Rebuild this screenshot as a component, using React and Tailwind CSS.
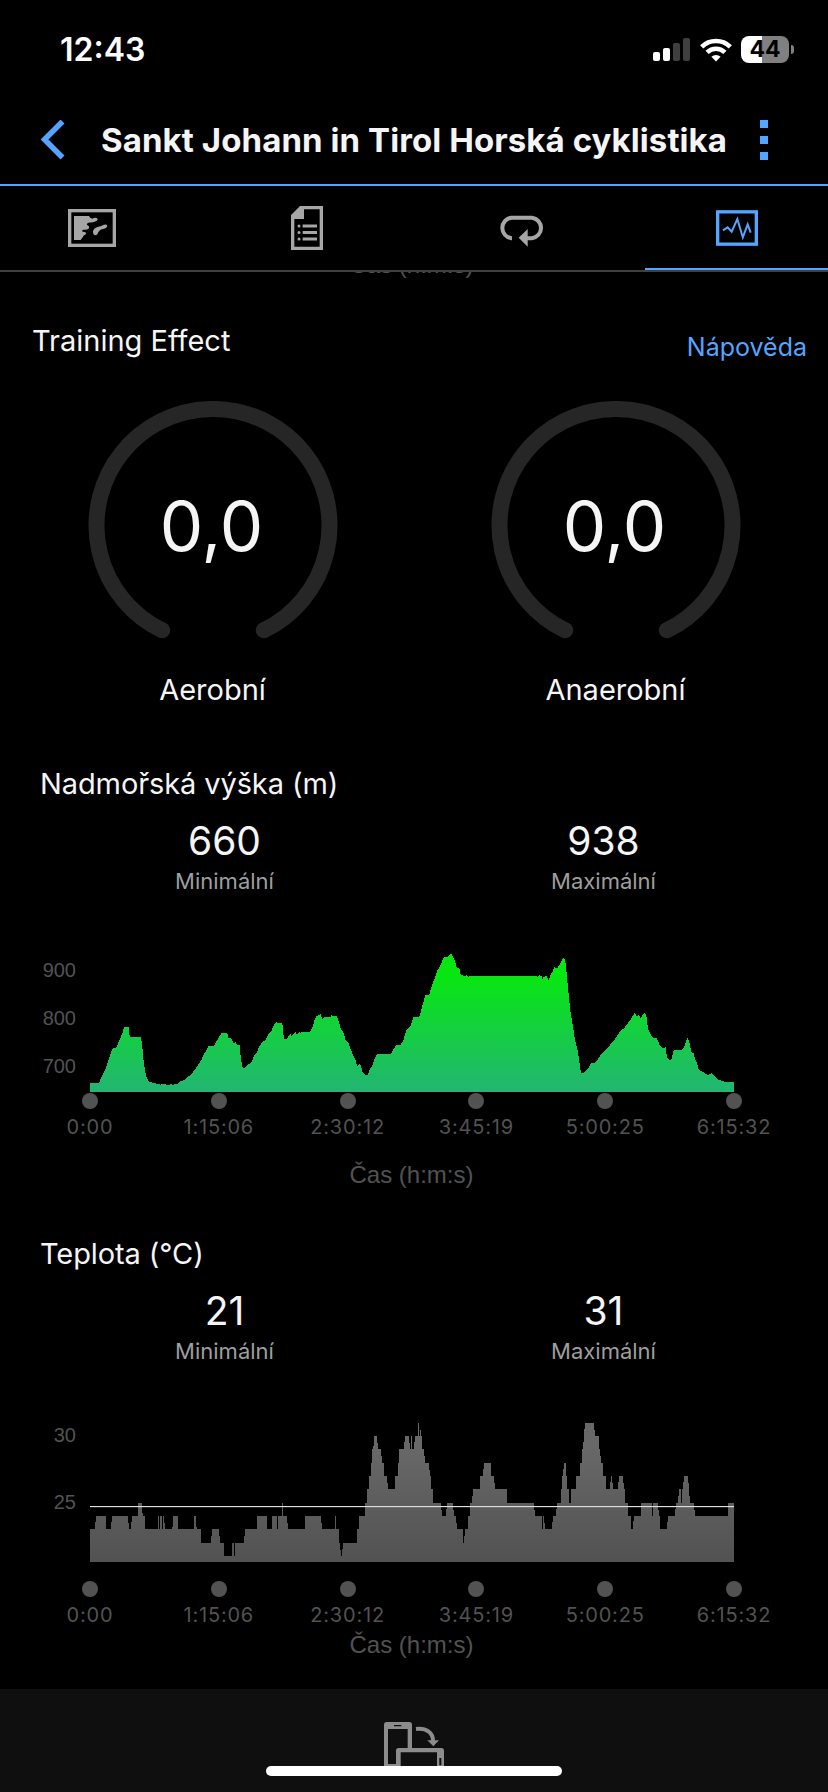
const BLUE = '#53a5ff';

// x,y outline of each profile, y grows downwards, 486 is the baseline
const elevation = [
    {
        shift: -90,
        points: '90,459 116,459 118,456 126,438 136,420 140,405 150,378 155,360 162,354 169,354 172,345 180,328 187,310 192,291 206,291 208,312 210,321 243,321 247,350 250,385 254,415 259,440 266,454 270,459 274,455 280,460 296,461 300,464 316,462 322,465 334,463 340,464 344,461 354,461 362,454 372,450 382,442 394,432 404,420 414,405 424,390 432,372 440,360 445,348 462,348 468,337 476,323 484,310 502,310 505,323 515,326 522,343 526,334 531,345 539,346 542,380 547,412 554,414 566,403 576,396 582,378 590,367 600,346 608,334 617,330 624,315 634,303 640,288 649,274 653,279 667,280 669,300 672,327 680,327 686,318 691,312 694,318 700,314 706,305 711,315 719,307 723,309 726,305 750,305 758,290 764,268 770,258 782,253 787,267 795,261 811,262 815,253 817,258 831,259 836,275 842,295 850,308 857,330 865,337 872,358 880,377 886,388 892,410 899,403 903,408 908,428 915,434 924,434 930,415 936,411 942,390 951,372 993,372 998,361 1006,350 1010,343 1016,346',
    },
    {
        shift: 930,
        points: '0,346 10,332 18,303 32,288 40,261 58,260 66,232 76,196 88,193 96,165 104,146 112,122 120,110 128,88 134,81 144,80 153,69 158,80 164,90 170,112 178,116 182,135 196,138 200,135 205,140 208,138 409,138 412,140 419,135 424,138 428,147 430,140 440,139 446,150 452,135 457,126 463,110 468,115 474,112 482,98 490,84 495,88 499,120 502,155 506,195 512,250 518,285 526,335 532,355 538,395 543,429 552,428 562,419 572,402 578,398 582,402 592,390 600,378 616,362 630,345 644,328 656,311 664,300 671,297 680,284 692,268 704,248 710,258 716,256 722,264 728,254 734,247 739,256 744,297 756,322 770,324 778,343 788,356 797,352 801,384 810,392 814,388 821,361 838,360 844,362 852,352 863,322 869,340 874,367 881,370 886,390 892,402 896,418 910,427 924,435 934,430 942,438 956,449 970,454 988,457 998,456 1002,458',
    },
];

const temperature = [
    {
        shift: -210,
        points: '210,387 225,387 228,348 258,348 258,387 273,387 276,348 324,348 327,387 333,387 336,348 354,348 354,309 366,309 368,348 375,348 375,387 414,387 415,348 417,348 417,387 420,387 420,348 426,348 427,387 429,387 430,348 432,348 435,387 457,387 460,348 474,348 474,387 522,387 522,348 527,348 530,387 543,387 543,429 573,429 576,387 597,387 600,429 612,429 612,468 636,468 636,429 642,429 642,468 645,468 645,429 672,429 675,387 711,387 711,348 741,348 741,387 756,387 756,348 771,348 771,387 773,387 774,348 786,348 786,309 789,309 789,348 801,348 804,387 855,387 855,348 903,348 906,387 945,387 945,348 947,348 948,387 957,387 958,429 960,429 963,468 966,468 969,429 1011,429 1011,387 1017,387 1017,348 1035,348 1036,309 1041,309 1041,267 1047,267 1047,228 1053,228 1053,189 1056,189 1056,147 1060,147 1062,108 1071,108 1074,147 1083,147 1086,189 1092,189 1092,228 1101,228 1104,267 1125,267 1125,228 1134,228 1134,189 1137,189 1137,147',
    },
    {
        shift: 930,
        points: '0,147 12,147 15,108 27,108 30,147 33,147 33,108 36,108 36,147 42,147 45,108 54,108 54,69 57,69 57,108 60,108 60,69 63,108 66,108 66,147 72,147 75,189 87,189 90,228 93,228 93,267 99,267 99,309 123,309 126,348 138,348 141,309 159,309 162,348 168,348 171,387 189,387 190,429 192,429 195,387 204,387 204,348 210,348 211,309 216,309 219,267 240,267 240,228 249,228 252,189 273,189 273,228 282,228 285,267 321,267 321,309 402,309 405,348 426,348 427,387 429,387 429,348 432,348 435,387 456,387 459,348 468,348 471,309 483,309 483,267 486,267 486,228 489,228 492,189 498,189 501,267 507,267 507,309 513,309 513,267 528,267 528,228 540,228 540,189 546,189 546,147 549,147 552,108 555,69 582,69 585,108 597,108 597,147 600,147 603,189 609,189 609,228 618,228 618,267 630,267 633,228 636,228 639,267 654,267 657,228 669,228 672,267 675,267 675,309 684,309 684,348 693,348 693,387 698,387 702,348 723,348 723,309 756,309 756,348 759,348 759,309 774,309 777,348 780,348 780,387 801,387 804,348 825,348 828,309 834,309 837,267 843,267 843,309 846,309 846,267 849,267 852,228 864,228 867,267 870,309 882,309 885,348 984,348 984,309 1002,309',
    },
];

const times = ['0:00', '1:15:06', '2:30:12', '3:45:19', '5:00:25', '6:15:32'];

const areaPoints = (parts) => {
    const outline = parts.flatMap(({ shift, points }) =>
        points.split(' ').map((pair) => {
            const [x, y] = pair.split(',').map(Number);
            return `${x + shift},${y}`;
        })
    );
    return ['0,486', ...outline, '1932,486'].join(' ');
};

const MapIcon = () => (
    <svg width="48" height="38" viewBox="201 87 144 114" fill="#a6a6a6">
        <rect x="206" y="92" width="134" height="104" fill="none" stroke="#a6a6a6" strokeWidth="10" />
        <path d="M219 108H264Q266 114 274 116Q284 111 290 116Q291 122 276 127L262 128Q256 131 258 135Q266 138 264 145Q258 151 246 149Q241 152 245 155Q256 155 255 162Q246 167 244 173L239 180H219Z" />
        <path d="M276 154Q278 143 292 140Q302 139 307 135Q317 131 319 138Q318 145 303 148Q294 150 290 161Q286 168 279 164Q275 161 276 154Z" />
    </svg>
);

const NotesIcon = () => (
    <svg width="32" height="44" viewBox="870 78 96 132" fill="#a6a6a6">
        <path fillRule="evenodd" d="M897 78H966V210H870V105ZM909 88V117H880V200H956V88Z" />
        <circle cx="894" cy="138" r="4.5" />
        <circle cx="894" cy="157.5" r="4.5" />
        <circle cx="894" cy="177" r="4.5" />
        <path d="M905 133.500H948V142.500H905ZM905 153H948V162H905ZM905 172.500H948V181.500H905Z" />
    </svg>
);

const LapsIcon = () => (
    <svg width="46" height="32" viewBox="252 104 138 96" className="mt-0.5">
        <path d="M291 173.500H289A31 31 0 0 1 289 112H351A31 31 0 0 1 351 173.500H336" fill="none" stroke="#a6a6a6" strokeWidth="12" />
        <path d="M311 172.500L338 146V199Z" fill="#a6a6a6" />
    </svg>
);

const ChartIcon = () => (
    <svg width="42" height="36" viewBox="903 90 126 108" fill="none" stroke={BLUE}>
        <rect x="908" y="95.500" width="116" height="97" strokeWidth="10" />
        <path d="M924 151L938 142L950 155L967 117L983.500 172L998 133L1007 158" strokeWidth="6" />
    </svg>
);

const RotateIcon = () => (
    <svg width="60" height="44" viewBox="432 155 180 132" fill="#8c8c8c">
        <path fillRule="evenodd" d="M440 155H508Q516 155 516 163V234H503V176H444V281H470V290H432V163Q432 155 440 155ZM462 164V168H484V164Z" />
        <path fillRule="evenodd" d="M476 233H604Q612 233 612 241V290H468V241Q468 233 476 233ZM482 246V290H591V246ZM598 263V285H604V263Z" />
        <path d="M528 176C558 172 580 186 579 213" fill="none" stroke="#8c8c8c" strokeWidth="12" />
        <path d="M562 210H597L580 228Z" />
    </svg>
);

const StatusBar = () => (
    <div className="flex h-[99px] items-center justify-between pl-[60px] pr-[34px]">
        <span className="text-[32px] font-semibold leading-8">12:43</span>
        <div className="flex items-center">
            <svg width="37" height="23" viewBox="0 0 37 23">
                <rect y="14" width="7" height="9" rx="2" fill="#fff" />
                <rect x="10" y="10" width="7" height="13" rx="2" fill="#fff" />
                <rect x="20" y="5" width="7" height="18" rx="2" fill="#3f3f3f" />
                <rect x="30" width="7" height="23" rx="2" fill="#3f3f3f" />
            </svg>
            <svg width="32" height="24" viewBox="0 0 32 24" className="ml-[9.5px]" fill="none" stroke="#fff" strokeWidth="4.600">
                <path d="M1.700 8.800A20.500 20.500 0 0 1 30.300 8.800" />
                <path d="M7.100 14.300A12.800 12.800 0 0 1 24.900 14.300" />
                <path d="M16 23.500L11.400 18.800A6.600 6.600 0 0 1 20.600 18.800Z" fill="#fff" stroke="none" />
            </svg>
            <div className="ml-[9.5px] flex h-[27px] w-12 items-center justify-center rounded-lg bg-linear-to-r from-white from-[44%] to-[#808080] to-[44%] text-[23px] font-bold leading-none text-black">
                44
            </div>
            <div className="ml-0.5 h-[9px] w-[3px] rounded-r-full bg-[#808080]" />
        </div>
    </div>
);

const Header = () => (
    <div className="flex h-[87px] items-center border-b-2 border-[#53a5ff] pb-[3px] pl-10">
        <svg width="26" height="40" viewBox="0 0 26 40" fill="none" stroke={BLUE} strokeWidth="5.500">
            <path d="M22.500 1.500L4.500 19.500L22.500 37.500" />
        </svg>
        <h1 className="ml-[35px] w-[628px] whitespace-nowrap text-[33px] font-bold leading-10 tracking-[0.08px] text-[#f5f5f5]">
            Sankt Johann in Tirol Horská cyklistika
        </h1>
        <div className="ml-[31px] flex flex-col gap-2">
            <span className="size-2 bg-[#53a5ff]" />
            <span className="size-2 bg-[#53a5ff]" />
            <span className="size-2 bg-[#53a5ff]" />
        </div>
    </div>
);

const Tabs = () => (
    <div className="flex h-[86px] justify-between border-b-2 border-[#404040]">
        <div className="flex w-[183px] items-center justify-center"><MapIcon /></div>
        <div className="flex w-[183px] items-center justify-center"><NotesIcon /></div>
        <div className="flex w-[183px] items-center justify-center pt-1"><LapsIcon /></div>
        <div className="flex w-[183px] items-center justify-center border-b-2 border-[#53a5ff] pt-0.5"><ChartIcon /></div>
    </div>
);

const Gauge = ({ label }) => (
    <div className="flex flex-1 flex-col items-center">
        <div className="grid h-[250px] w-[250px] place-items-center">
            <svg width="250" height="250" viewBox="0 0 250 250" className="col-start-1 row-start-1">
                <path d="M74.200 229.300A116.500 116.500 0 1 1 175.800 229.300" fill="none" stroke="#262626" strokeWidth="16" strokeLinecap="round" />
            </svg>
            <span className="col-start-1 row-start-1 pr-0.5 text-[69px] leading-none text-[#f5f5f5]">0,0</span>
        </div>
        <span className="mt-[19px] text-[29px] leading-10 text-[#f5f5f5]">{label}</span>
    </div>
);

const Stat = ({ value, label }) => (
    <div className="flex flex-1 flex-col items-center">
        <span className="text-[39px] leading-[50px] text-[#f5f5f5]">{value}</span>
        <span className="mt-px text-[22px] leading-[28px] text-[#9e9e9e]">{label}</span>
    </div>
);

const TimeAxis = () => (
    <div className="ml-[25.6px] grid w-[772.8px] grid-cols-6">
        {times.map((time) => (
            <div key={time} className="flex flex-col items-center">
                <span className="size-4 rounded-full bg-[#525252]" />
                <span className="mt-1.5 text-[20px] leading-6 tracking-[0.8px] text-[#525252]">{time}</span>
            </div>
        ))}
    </div>
);

const AreaChart = ({ id, parts, top, bottom, average }) => (
    <svg width="644" height="162" viewBox="0 0 1932 486">
        <defs>
            <linearGradient id={id} gradientUnits="userSpaceOnUse" x1="0" y1="140" x2="0" y2="486">
                <stop offset="0" stopColor={top} />
                <stop offset="1" stopColor={bottom} />
            </linearGradient>
        </defs>
        <polygon points={areaPoints(parts)} fill={`url(#${id})`} shapeRendering="crispEdges" />
        {average && <rect y={average} width="1932" height="3.500" fill="#dedede" />}
    </svg>
);

const SectionTitle = ({ children }) => (
    <h2 className="ml-10 text-[29px] leading-10 tracking-[-0.1px] text-[#f5f5f5]">{children}</h2>
);

const Caption = () => (
    <p className="pr-[5px] text-center font-['Liberation_Sans',sans-serif] text-[24px] leading-[30px] text-[#525252]">Čas (h:m:s)</p>
);

export default function App() {
    return (
        <div className="flex h-[1792px] w-[828px] flex-col overflow-hidden bg-black font-['Inter',sans-serif] text-white">
            <StatusBar />
            <Header />
            <Tabs />

            <main className="h-[1417px] overflow-hidden">
                {/* tail of the chart that is scrolled under the tabs */}
                <div className="-mt-[22px]">
                    <Caption />
                </div>

                <div className="mt-[41px] flex h-10 justify-between pl-8 pr-[21px]">
                    <h2 className="text-[29px] leading-10 text-[#f5f5f5]">Training Effect</h2>
                    <a href="#help" className="mt-1.5 text-[25px] leading-10 text-[#53a5ff]">Nápověda</a>
                </div>
                <div className="mt-10 flex px-[11px]">
                    <Gauge label="Aerobní" />
                    <Gauge label="Anaerobní" />
                </div>

                <section className="mt-[54px] h-[470px]">
                    <SectionTitle>Nadmořská výška (m)</SectionTitle>
                    <div className="mt-3 flex px-[35px]">
                        <Stat value="660" label="Minimální" />
                        <Stat value="938" label="Maximální" />
                    </div>
                    <div className="mt-[35px] flex">
                        <div className="w-[90px] pr-[14px] pt-4 text-right font-['Liberation_Sans',sans-serif] text-[20px] leading-[48px] text-[#525252]">
                            <p>900</p>
                            <p>800</p>
                            <p>700</p>
                        </div>
                        <AreaChart id="elevation" parts={elevation} top="#08e612" bottom="#22b573" />
                    </div>
                    <div className="mt-px">
                        <TimeAxis />
                    </div>
                    <div className="mt-[21px]">
                        <Caption />
                    </div>
                </section>

                <section>
                    <SectionTitle>Teplota (°C)</SectionTitle>
                    <div className="mt-3 flex px-[35px]">
                        <Stat value="21" label="Minimální" />
                        <Stat value="31" label="Maximální" />
                    </div>
                    <div className="mt-[35px] flex">
                        <div className="w-[90px] pr-[14px] pt-0.5 text-right font-['Liberation_Sans',sans-serif] text-[20px] leading-[67px] text-[#525252]">
                            <p>30</p>
                            <p>25</p>
                        </div>
                        <AreaChart id="temperature" parts={temperature} top="#686868" bottom="#525252" average="318" />
                    </div>
                    <div className="mt-[19px]">
                        <TimeAxis />
                    </div>
                    <div className="mt-[3px]">
                        <Caption />
                    </div>
                </section>
            </main>

            <footer className="flex h-[103px] flex-col items-center bg-[#0f0f0f] pt-[33px]">
                <RotateIcon />
                <div className="h-2.5 w-[296px] rounded-full bg-white" />
            </footer>
        </div>
    );
}
